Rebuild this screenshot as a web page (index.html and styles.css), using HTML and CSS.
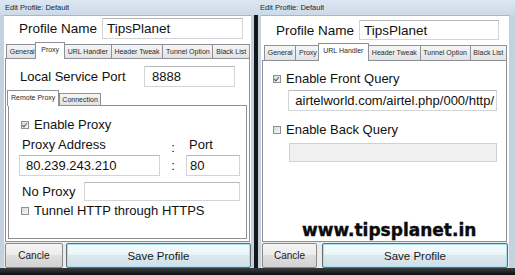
FILE: index.html
```html
<!DOCTYPE html>
<html lang="en">
<head>
    <meta charset="UTF-8">
    <title>Edit Profile</title>
    <link rel="stylesheet" href="styles.css">
</head>
<body>
<div class="desk">

    <section class="win win-left">
        <header class="titlebar">Edit Profile: Default</header>
        <div class="client">
            <div class="name-row">
                <span class="name-label">Profile Name</span>
                <div class="field field-name">TipsPlanet</div>
            </div>
            <ul class="tabs">
                <li class="tab">General</li>
                <li class="tab active">Proxy</li>
                <li class="tab">URL Handler</li>
                <li class="tab">Header Tweak</li>
                <li class="tab">Tunnel Option</li>
                <li class="tab">Black List</li>
            </ul>
            <div class="panel">
                <div class="port-row">
                    <span class="label">Local Service Port</span>
                    <div class="field field-port">8888</div>
                </div>
                <ul class="tabs tabs-sub">
                    <li class="tab active">Remote Proxy</li>
                    <li class="tab">Connection</li>
                </ul>
                <div class="subpanel">
                    <div class="check-row row-enable">
                        <span class="check on"></span>
                        <span class="label">Enable Proxy</span>
                    </div>
                    <div class="addr-grid">
                        <span class="label">Proxy Address</span>
                        <span class="label colon">:</span>
                        <span class="label">Port</span>
                        <div class="field">80.239.243.210</div>
                        <span class="label colon">:</span>
                        <div class="field field-portnum">80</div>
                    </div>
                    <div class="noproxy-row">
                        <span class="label">No Proxy</span>
                        <div class="field field-noproxy"></div>
                    </div>
                    <div class="check-row row-tunnel">
                        <span class="check"></span>
                        <span class="label">Tunnel HTTP through HTTPS</span>
                    </div>
                </div>
            </div>
            <div class="buttons">
                <button class="btn btn-cancel">Cancle</button>
                <button class="btn btn-save">Save Profile</button>
            </div>
        </div>
        <div class="win-foot"></div>
    </section>

    <section class="win win-right">
        <header class="titlebar">Edit Profile: Default</header>
        <div class="client">
            <div class="name-row">
                <span class="name-label">Profile Name</span>
                <div class="field field-name">TipsPlanet</div>
            </div>
            <ul class="tabs">
                <li class="tab">General</li>
                <li class="tab">Proxy</li>
                <li class="tab active">URL Handler</li>
                <li class="tab">Header Tweak</li>
                <li class="tab">Tunnel Option</li>
                <li class="tab">Black List</li>
            </ul>
            <div class="panel">
                <div class="check-row row-front">
                    <span class="check on"></span>
                    <span class="label">Enable Front Query</span>
                </div>
                <div class="field field-url">airtelworld.com/airtel.php/000/http/</div>
                <div class="check-row row-back">
                    <span class="check"></span>
                    <span class="label">Enable Back Query</span>
                </div>
                <div class="field field-disabled"></div>
                <div class="watermark">www.tipsplanet.in</div>
            </div>
            <div class="buttons">
                <button class="btn btn-cancel">Cancle</button>
                <button class="btn btn-save">Save Profile</button>
            </div>
        </div>
        <div class="win-foot"></div>
    </section>

</div>
</body>
</html>
```

FILE: styles.css
```css
* {
    box-sizing: border-box;
}

body {
    margin: 0;
    background: #161616;
    font-family: "Liberation Sans", Arial, sans-serif;
    color: #111;
}

.desk {
    display: flex;
    gap: 4px;
    width: 515px;
    height: 275px;
    overflow: hidden;
}

/* window frame */

.win {
    display: flex;
    flex-direction: column;
    height: 275px;
    background: #c4d2e0;
}

.win-left {
    width: 254px;
    padding: 0 3px 0 4px;
}

.win-right {
    width: 257px;
    padding: 0 6px 0 3px;
}

.titlebar {
    height: 15px;
    margin: 0 -6px 0 -4px;
    padding: 3px 0 0 5px;
    background: linear-gradient(#dde7f2, #cbd9e8);
    font-size: 7.5px;
    line-height: 9px;
    color: #1b2633;
}

.win-right .titlebar {
    padding-left: 3px;
}

.client {
    display: flex;
    flex-direction: column;
    height: 253px;
    background: #fff;
    border-top: 1px solid #a9b6c3;
}

.win-foot {
    height: 7px;
    margin: 0 -6px;
    background: linear-gradient(#3b3d40, #0e0e0e);
}

/* name row */

.name-row {
    display: flex;
    align-items: center;
    gap: 5px;
    padding: 2px 0 0 15px;
}

.win-right .name-row {
    padding-top: 4px;
}

.name-label {
    font-size: 13.5px;
}

.field {
    display: flex;
    align-items: center;
    height: 21px;
    padding-left: 5px;
    background: #fff;
    border: 1px solid #d2d4d8;
    border-top-color: #b5b8bd;
    font-size: 13px;
    white-space: nowrap;
    overflow: hidden;
}

.field-name {
    width: 141px;
    padding-left: 4px;
    font-size: 13.5px;
}

.win-right .field-name {
    width: 140px;
    height: 20px;
}

/* tabs */

.tabs {
    display: flex;
    align-items: flex-end;
    height: 17px;
    margin: 2px 0 0;
    padding: 0 2px;
    list-style: none;
    position: relative;
    z-index: 1;
}

.win-right .tabs {
    height: 18px;
    padding: 0 3px;
}

.tab {
    flex: 1 1 auto;
    height: 14px;
    padding: 0 1px;
    margin-right: -1px;
    border: 1px solid #8d9097;
    border-bottom: none;
    background: linear-gradient(#f6f6f6, #e2e2e2);
    font-size: 7px;
    line-height: 13px;
    text-align: center;
    color: #2a2a2a;
    white-space: nowrap;
}

.win-right .tabs > .tab {
    height: 15px;
    line-height: 14px;
}

.tabs > .tab.active {
    height: 17px;
    margin: 0 -1px -1px -2px;
    padding: 0 3px;
    background: #fff;
    line-height: 14px;
}

.win-right .tabs > .tab.active {
    height: 18px;
}

/* tab page */

.panel {
    display: flex;
    flex-direction: column;
    height: 185px;
    margin: 0 1px;
    border: 1px solid #8d9097;
    background: #fff;
}

.win-right .panel {
    height: 184px;
    margin: 0 2px 0 1px;
}

.label {
    font-size: 13px;
    white-space: nowrap;
}

.port-row {
    display: flex;
    align-items: center;
    padding: 7px 0 0 14px;
}

.port-row .label {
    width: 124px;
}

.field-port {
    width: 91px;
    padding-left: 7px;
}

.tabs-sub {
    height: 17px;
    margin-top: 1px;
    padding: 0 1px;
}

.tabs-sub .tab {
    flex: none;
    height: 12px;
    font-size: 7px;
    line-height: 11px;
    padding: 0 2px;
}

.tabs-sub > .tab.active {
    height: 16px;
    margin: 0 0 -1px 0;
    padding: 0 3px;
    line-height: 14px;
}

.subpanel {
    height: 134px;
    margin: 0 2px;
    border: 1px solid #8d9097;
    background: #fff;
}

/* checkbox rows */

.check-row {
    display: flex;
    align-items: center;
    gap: 5px;
    height: 16px;
    padding-left: 12px;
}

.check {
    position: relative;
    width: 8px;
    height: 8px;
    border: 1px solid #8e8f8f;
    background: linear-gradient(135deg, #d8d8d8, #f8f8f8);
}

.check.on::after {
    content: "";
    position: absolute;
    left: 1px;
    top: 0;
    width: 2px;
    height: 4px;
    border: solid #5c5c5c;
    border-width: 0 1px 1px 0;
    transform: rotate(40deg);
}

.row-enable {
    margin-top: 11px;
}

.row-tunnel {
    margin-top: 2px;
}

/* proxy address block */

.addr-grid {
    display: grid;
    grid-template-columns: 141px 26px 54px;
    grid-template-rows: 16px 21px;
    row-gap: 2px;
    margin: 4px 0 0 10px;
}

.addr-grid > .label {
    padding-left: 3px;
    line-height: 16px;
}

.addr-grid > .colon {
    padding: 0;
    text-align: center;
    line-height: 21px;
}

.addr-grid > .field {
    padding-left: 6px;
}

.addr-grid > .field-portnum {
    padding-left: 3px;
}

.noproxy-row {
    display: flex;
    align-items: center;
    margin: 6px 0 0 10px;
}

.noproxy-row .label {
    width: 65px;
    padding-left: 3px;
}

.field-noproxy {
    width: 156px;
    height: 19px;
}

/* url handler page */

.row-front {
    margin-top: 10px;
    padding-left: 10px;
}

.field-url {
    justify-content: flex-end;
    width: 209px;
    margin: 3px 0 0 25px;
    padding: 0 2px 0 0;
}

.row-back {
    margin-top: 11px;
    padding-left: 10px;
}

.field-disabled {
    width: 208px;
    height: 19px;
    margin: 5px 0 0 26px;
    background: #f0f0f0;
    border-color: #cfd1d4;
}

.watermark {
    margin: 58px 0 0 39px;
    font-family: "DejaVu Sans", Verdana, sans-serif;
    font-weight: bold;
    font-size: 17px;
    line-height: 20px;
    color: #0b0b0b;
    -webkit-text-stroke: 0.4px #0b0b0b;
}

/* buttons */

.buttons {
    display: flex;
    gap: 3px;
    flex: 1;
    padding: 1px 0 0 1px;
    background: #ebebeb;
}

.win-right .buttons {
    gap: 5px;
    padding-top: 1px;
}

.btn {
    height: 25px;
    border: 1px solid #8a8a8a;
    border-radius: 2px;
    font-family: "Liberation Sans", Arial, sans-serif;
    color: #1a1a1a;
    padding: 0;
}

.btn-cancel {
    width: 58px;
    background: linear-gradient(#f4f4f4, #ececec 50%, #dedede 50%, #d2d2d2);
    font-size: 10px;
}

.win-right .btn-cancel {
    width: 55px;
}

.btn-save {
    width: 186px;
    background: linear-gradient(#f5fbfd, #e9f4f8 50%, #dbe9ee 50%, #d0dfe5);
    border-color: #5d7079;
    box-shadow: inset 0 0 0 1px #a8dff0;
    font-size: 11.5px;
}
```
